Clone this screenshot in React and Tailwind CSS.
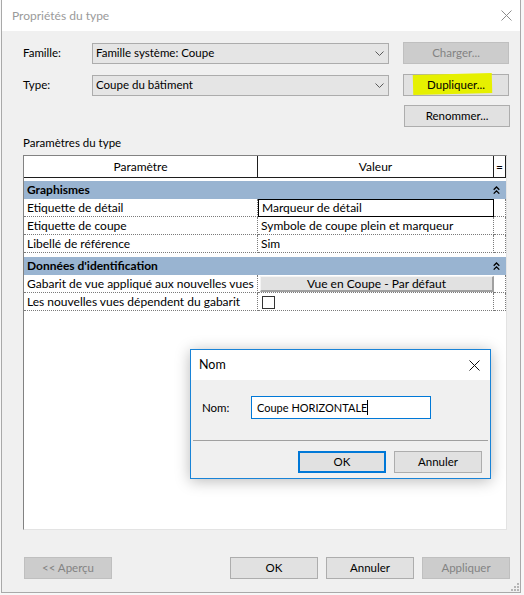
import React from "react";

function Chevron() {
  return (
    <svg width="9" height="5" viewBox="0 0 9 5" className="shrink-0">
      <path d="M0.5 0.5 L4.5 4.5 L8.5 0.5" fill="none" stroke="#5a5a5a" strokeWidth="1" />
    </svg>
  );
}

function Combo({ children }) {
  return (
    <div className="w-[297px] h-[21px] bg-[#e5e5e5] border border-[#acacac] flex items-center justify-between pl-[3px] pr-[4px]">
      <span className="leading-[16px]">{children}</span>
      <Chevron />
    </div>
  );
}

function DoubleUp() {
  return (
    <svg width="7" height="8" viewBox="0 0 7 8" className="shrink-0">
      <path d="M0.7 3.8 L3.5 1 L6.3 3.8 M0.7 7.6 L3.5 4.8 L6.3 7.6" fill="none" stroke="#000" strokeWidth="1.3" />
    </svg>
  );
}

function Row({ label, children }) {
  return (
    <div className="flex h-[18px]">
      <div className="w-[234px] h-[18px] border-r border-b border-dotted border-[#7a7a7a] pl-[3px] flex items-center whitespace-nowrap overflow-hidden">
        {label}
      </div>
      {children}
      <div className="w-[12px] h-[18px] border-r border-b border-dotted border-[#7a7a7a]" />
    </div>
  );
}

export default function App() {
  return (
    <div className="w-[524px] h-[595px] bg-[#f7f7f7] font-['Lato',sans-serif] text-[12px] text-black relative overflow-hidden">
      <div className="ml-[1px] w-[520px] h-[593px] border-x border-b border-[#a9a9a9] bg-[#f0f0f0] flex flex-col relative">
        {/* Title bar */}
        <div className="h-[31px] bg-white flex items-center justify-between pl-[10px] pr-[8px] shrink-0">
          <span className="text-[#9a9a9a] text-[12px] leading-[16px]">Propriétés du type</span>
          <svg width="11" height="11" viewBox="0 0 11 11">
            <path d="M0.5 0.5 L10.5 10.5 M10.5 0.5 L0.5 10.5" stroke="#8c8c8c" strokeWidth="1" />
          </svg>
        </div>

        <div className="flex flex-col pl-[21px] pr-[10px] text-[11.5px]">
          {/* Famille */}
          <div className="mt-[11px] flex items-center h-[22px]">
            <span className="w-[69px] leading-[16px]">Famille:</span>
            <Combo>Famille système: Coupe</Combo>
            <div className="ml-[14px] w-[106px] h-[22px] bg-[#cccccc] border border-[#bfbfbf] text-[#838383] flex items-center justify-center leading-[16px]">
              Charger...
            </div>
          </div>
          {/* Type */}
          <div className="mt-[10px] flex items-center h-[22px]">
            <span className="w-[69px] leading-[16px]">Type:</span>
            <Combo>Coupe du bâtiment</Combo>
            <div className="ml-[14px] w-[106px] h-[22px] bg-[#e1e1e1] border border-[#adadad] flex items-center justify-center relative">
              <span className="absolute left-[9px] top-[-1px] w-[79px] h-[20px] bg-[#e6f000] -rotate-[1.5deg]" />
              <span className="relative leading-[16px]">Dupliquer...</span>
            </div>
          </div>
          {/* Renommer */}
          <div className="mt-[9px] flex justify-end h-[22px]">
            <div className="w-[106px] h-[22px] bg-[#e1e1e1] border border-[#adadad] flex items-center justify-center leading-[16px]">
              Renommer...
            </div>
          </div>

          <div className="mt-[8px] h-[16px] leading-[16px]">Paramètres du type</div>

          {/* Table */}
          <div className="mt-[4px] w-[484px] h-[375px] border-t border-l border-[#828282] border-r border-b border-r-[#e3e3e3] border-b-[#e3e3e3] bg-white flex flex-col text-[12px]">
            <div className="flex h-[22px] border-b border-[#1e1e1e]">
              <div className="w-[234px] border-r border-[#1e1e1e] flex items-center justify-center leading-[16px]">Paramètre</div>
              <div className="w-[236px] border-r border-[#1e1e1e] flex items-center justify-center leading-[16px]">Valeur</div>
              <div className="w-[12px] border-r border-[#1e1e1e] flex items-center justify-center leading-[16px]">=</div>
            </div>
            <div className="h-[3px]" />
            <div className="h-[18px] bg-[#99b4d1] flex items-center justify-between pl-[3px] pr-[6px] font-bold">
              <span className="leading-[16px]">Graphismes</span>
              <DoubleUp />
            </div>
            <Row label="Etiquette de détail">
              <div className="w-[236px] h-[18px] border border-black pl-[3px] flex items-center whitespace-nowrap">Marqueur de détail</div>
            </Row>
            <Row label="Etiquette de coupe">
              <div className="w-[236px] h-[18px] border-r border-b border-dotted border-[#7a7a7a] pl-[3px] flex items-center whitespace-nowrap">Symbole de coupe plein et marqueur</div>
            </Row>
            <Row label="Libellé de référence">
              <div className="w-[236px] h-[18px] border-r border-b border-dotted border-[#7a7a7a] pl-[3px] flex items-center whitespace-nowrap">Sim</div>
            </Row>
            <div className="h-[4px]" />
            <div className="h-[18px] bg-[#99b4d1] flex items-center justify-between pl-[3px] pr-[6px] font-bold">
              <span className="leading-[16px]">Données d'identification</span>
              <DoubleUp />
            </div>
            <Row label="Gabarit de vue appliqué aux nouvelles vues">
              <div className="w-[236px] h-[18px] border-b border-dotted border-[#7a7a7a] pl-[2px] pt-[1px] flex">
                <div className="flex-1 bg-[#e1e1e1] border-t border-l border-[#f4f4f4] border-r-2 border-b-2 border-r-[#a0a0a0] border-b-[#a0a0a0] flex items-center justify-center leading-[14px] whitespace-nowrap">
                  Vue en Coupe - Par défaut
                </div>
              </div>
            </Row>
            <Row label="Les nouvelles vues dépendent du gabarit">
              <div className="w-[236px] h-[18px] border-r border-b border-dotted border-[#7a7a7a] pl-[4px] pt-[3px]">
                <div className="w-[13px] h-[13px] border border-[#333333] bg-white" />
              </div>
            </Row>
          </div>

          {/* Bottom buttons */}
          <div className="mt-[27px] flex items-center h-[22px]">
            <div className="ml-[1px] w-[88px] h-[22px] bg-[#cccccc] border border-[#bfbfbf] text-[#838383] flex items-center justify-center leading-[16px]">
              &lt;&lt; Aperçu
            </div>
            <div className="ml-auto flex gap-[8px]">
              <div className="w-[88px] h-[22px] bg-[#e1e1e1] border border-[#adadad] flex items-center justify-center leading-[16px]">OK</div>
              <div className="w-[88px] h-[22px] bg-[#e1e1e1] border border-[#adadad] flex items-center justify-center leading-[16px]">Annuler</div>
              <div className="w-[88px] h-[22px] bg-[#cccccc] border border-[#bfbfbf] text-[#838383] flex items-center justify-center leading-[16px]">Appliquer</div>
            </div>
          </div>
        </div>

        {/* resize grip */}
        <svg width="8" height="8" viewBox="0 0 8 8" className="absolute right-[1px] bottom-[1px]">
          <rect x="6" y="0" width="2" height="2" fill="#b5b5b5" />
          <rect x="3" y="3" width="2" height="2" fill="#b5b5b5" />
          <rect x="6" y="3" width="2" height="2" fill="#b5b5b5" />
          <rect x="0" y="6" width="2" height="2" fill="#b5b5b5" />
          <rect x="3" y="6" width="2" height="2" fill="#b5b5b5" />
          <rect x="6" y="6" width="2" height="2" fill="#b5b5b5" />
        </svg>
      </div>

      {/* Nom dialog */}
      <div className="absolute left-[190px] top-[349px] w-[301px] h-[130px] border border-[#1883d7] bg-[#f0f0f0] shadow-[0_2px_14px_rgba(0,0,0,0.28)] flex flex-col text-[11.5px]">
        <div className="h-[30px] bg-white flex items-center justify-between pl-[8px] pr-[10px] shrink-0">
          <span className="text-[12.5px] leading-[16px]">Nom</span>
          <svg width="11" height="11" viewBox="0 0 11 11">
            <path d="M0.5 0.5 L10.5 10.5 M10.5 0.5 L0.5 10.5" stroke="#111" strokeWidth="1" />
          </svg>
        </div>
        <div className="mt-[16px] flex items-center pl-[11px]">
          <span className="w-[49px] leading-[16px]">Nom:</span>
          <div className="w-[180px] h-[23px] bg-white border border-[#0078d7] flex items-center pl-[5px]">
            <span className="leading-[16px] text-[11px]">Coupe HORIZONTALE</span>
            <span className="w-[1px] h-[15px] bg-black" />
          </div>
        </div>
        <div className="mt-[21px] mx-[2px] h-[1px] bg-[#a0a0a0]" />
        <div className="mt-[10px] flex justify-end gap-[8px] pr-[8px]">
          <div className="w-[88px] h-[22px] bg-[#e1e1e1] border-2 border-[#0078d7] flex items-center justify-center leading-[16px]">OK</div>
          <div className="w-[88px] h-[22px] bg-[#e1e1e1] border border-[#adadad] flex items-center justify-center leading-[16px]">Annuler</div>
        </div>
      </div>
    </div>
  );
}
